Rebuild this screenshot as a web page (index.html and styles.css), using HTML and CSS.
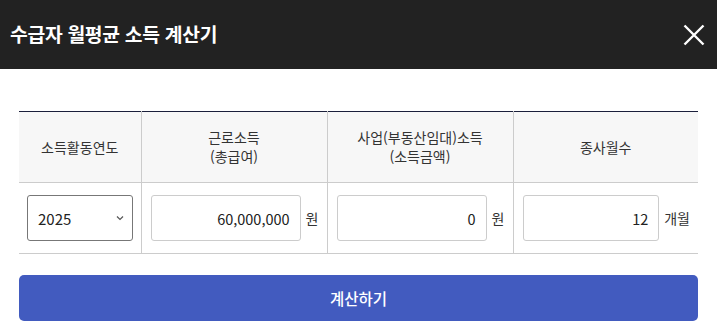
FILE: index.html
```html
<!DOCTYPE html>
<html lang="ko">
<head>
<meta charset="utf-8">
<link rel="stylesheet" href="styles.css">
</head>
<body>
<header class="top">
  <h1 class="title">수급자 월평균 소득 계산기</h1>
  <button class="close" aria-label="닫기">
    <svg width="22" height="22" viewBox="0 0 22 22"><path d="M1.5 1.5 L20.5 20.5 M20.5 1.5 L1.5 20.5" stroke="#fff" stroke-width="2.4" fill="none"/></svg>
  </button>
</header>
<main class="content">
  <table class="calc">
    <colgroup><col class="c1"><col class="c2"><col class="c3"><col class="c4"></colgroup>
    <thead>
      <tr>
        <th>소득활동연도</th>
        <th>근로소득<br>(총급여)</th>
        <th>사업(부동산임대)소득<br>(소득금액)</th>
        <th>종사월수</th>
      </tr>
    </thead>
    <tbody>
      <tr>
        <td><div class="select"><span>2025</span><svg width="8" height="6" viewBox="0 0 8 6"><path d="M1 1.5 L4 4.5 L7 1.5" stroke="#555" stroke-width="1.2" fill="none"/></svg></div></td>
        <td><div class="field"><div class="input">60,000,000</div><span class="unit">원</span></div></td>
        <td><div class="field"><div class="input">0</div><span class="unit">원</span></div></td>
        <td><div class="field"><div class="input">12</div><span class="unit">개월</span></div></td>
      </tr>
    </tbody>
  </table>
  <button class="submit">계산하기</button>
  <h2 class="result">계산결과</h2>
</main>
</body>
</html>
```
FILE: styles.css
```css
* { box-sizing: border-box; }
html, body { margin: 0; padding: 0; background: #fff; overflow: hidden; height: 325px; }
body { font-family: "Noto Sans CJK KR", "Noto Sans", sans-serif; color: #333; }
.top {
  height: 69px; background: #222; display: flex; align-items: center;
  justify-content: space-between; padding: 0 12px 0 10px;
}
.title { margin: 0; color: #fff; font-size: 19.3px; font-weight: 700; letter-spacing: -0.3px; padding-bottom: 2px; }
.close { background: none; border: 0; padding: 0; width: 22px; height: 22px; display: flex; }
.content { padding: 42px 19px 0; }
.calc { width: 679px; border-collapse: collapse; table-layout: fixed; border-top: 1px solid #1b1f3b; border-bottom: 1px solid #1b1f3b; }
.c1 { width: 122px; } .c2 { width: 186px; } .c3 { width: 186px; } .c4 { width: 185px; }
.calc th {
  background: #f7f7f7; font-weight: 400; font-size: 14px; line-height: 19px; color: #333;
  height: 71px; border-left: 1px solid #ccc; border-bottom: 1px solid #ccc; text-align: center; padding: 0;
}
.calc td { border-left: 1px solid #ccc; border-bottom: 1px solid #ccc; height: 71px; padding: 0 8px; }
.calc th:first-child, .calc td:first-child { border-left: 0; }
.select {
  width: 106px; height: 46px; border: 1px solid #777; border-radius: 3px; display: flex; align-items: center;
  justify-content: space-between; padding: 0 8px 0 10px; font-size: 15px; color: #222;
}
.field { display: flex; align-items: center; gap: 5px; padding-left: 1px; }
.input {
  flex: 1; height: 46px; border: 1px solid #ccc; border-radius: 3px; display: flex; align-items: center;
  justify-content: flex-end; padding: 0 10px; font-size: 14.5px; color: #222;
}
.unit { font-size: 14px; color: #333; }
.submit {
  display: block; width: 679px; height: 46px; margin-top: 21px; background: #425bbf; color: #fff;
  border: 0; border-radius: 5px; font-family: inherit; font-size: 15.5px; font-weight: 500;
}
.result { margin: 3px 0 0 18px; font-size: 17px; font-weight: 700; color: #111; }
```
